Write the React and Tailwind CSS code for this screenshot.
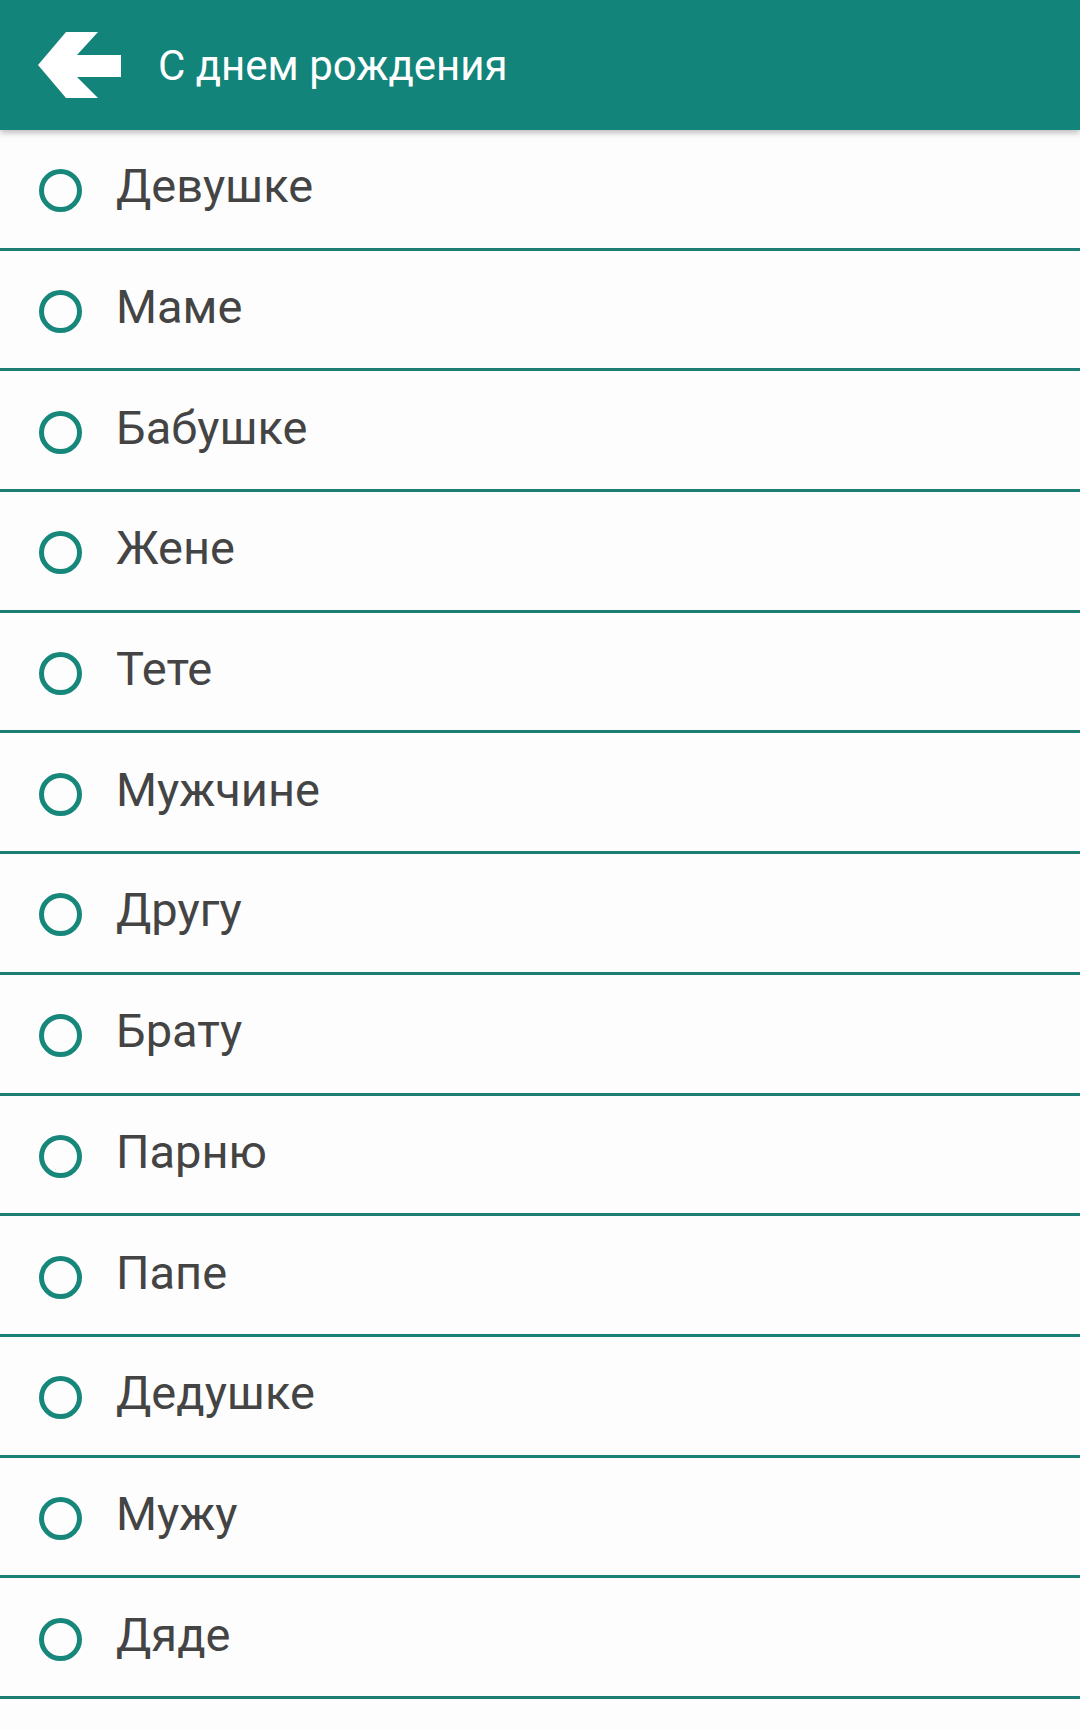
const items = [
  'Девушке',
  'Маме',
  'Бабушке',
  'Жене',
  'Тете',
  'Мужчине',
  'Другу',
  'Брату',
  'Парню',
  'Папе',
  'Дедушке',
  'Мужу',
  'Дяде',
]

function BackArrow() {
  return (
    <svg width="84" height="70" viewBox="0 0 84 70" className="shrink-0">
      <polygon
        points="0,35 28,2 60,2 39,25 83,25 83,47 39,47 60,68 28,68"
        fill="#ffffff"
      />
    </svg>
  )
}

function Radio() {
  return (
    <div className="w-[43px] h-[43px] shrink-0 rounded-full border-[5px] border-[#16877a]" />
  )
}

export default function App() {
  return (
    <div className="w-[1080px] min-h-[1730px] bg-[#fdfdfd] font-['Roboto',sans-serif]">
      <header className="relative z-10 h-[130px] bg-[#12847a] flex items-center pl-[38px] shadow-[0_3px_6px_rgba(0,0,0,0.25)]">
        <BackArrow />
        <h1 className="ml-[36px] text-[42px] text-white leading-none pt-[2px]">С днем рождения</h1>
      </header>

      <ul>
        {items.map((label) => (
          <li
            key={label}
            className="h-[120.7px] flex items-center pl-[39px] pt-[4px] border-b-[3px] border-[#1b7f73]"
          >
            <Radio />
            <span className="ml-[34px] text-[47px] text-[#444444] leading-none pb-[10px]">{label}</span>
          </li>
        ))}
      </ul>
    </div>
  )
}
